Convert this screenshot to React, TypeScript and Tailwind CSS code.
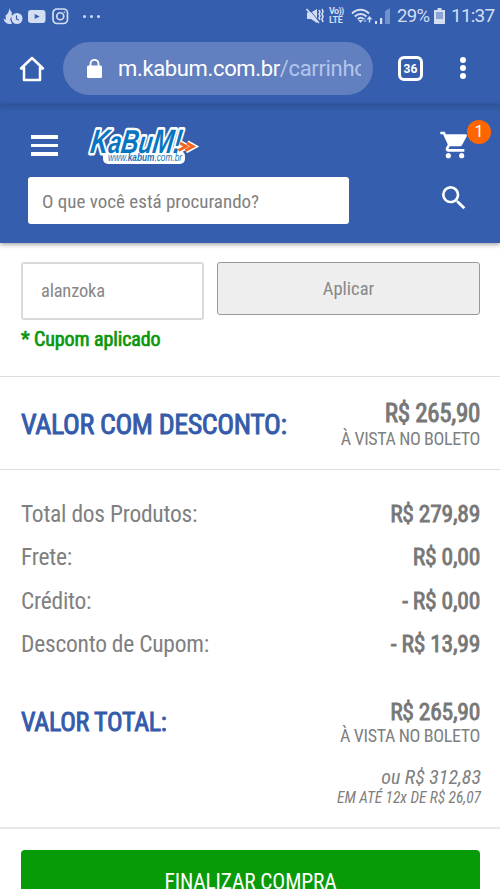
import React from 'react';
import { MdSearch, MdShoppingCart } from 'react-icons/md';

interface SummaryRow {
    label: string;
    value: string;
}

const summaryRows: SummaryRow[] = [
    { label: 'Total dos Produtos:', value: 'R$ 279,89' },
    { label: 'Frete:', value: 'R$ 0,00' },
    { label: 'Crédito:', value: '- R$ 0,00' },
    { label: 'Desconto de Cupom:', value: '- R$ 13,99' },
];

const StatusBar: React.FC = () => (
    <div className="flex h-8 items-center justify-between bg-[#355fae] pr-[6px] pl-[3px] text-[#d3def3]">
        <div className="flex items-center">
            <svg width="20" height="17" viewBox="0 0 20 17" fill="currentColor">
                <path d="M6 0c1 3 4 4 2.500 6.500L9.500 8 7 11l2 5C4 16.500 1 14 .6 10.500L3 12 2.500 7.500c2-1 4-4 3.500-7.500Z" />
                <circle cx="14" cy="10.500" r="5.500" />
                <path d="M13.500 7.500V11l2.400 1.200" stroke="#355fae" strokeWidth="1.200" fill="none" />
            </svg>
            <svg className="ml-[5px]" width="18" height="13" viewBox="0 0 18 13">
                <rect width="17.500" height="13" rx="3" fill="currentColor" />
                <path d="M6.700 4v5l5-2.500Z" fill="#355fae" />
            </svg>
            <svg className="ml-[6px]" width="17" height="17" viewBox="0 0 17 17" fill="none" stroke="currentColor" strokeWidth="1.700">
                <rect x="1" y="1" width="14.500" height="14.500" rx="4" />
                <circle cx="8.250" cy="8.250" r="3.500" />
                <circle cx="12.300" cy="4.200" r=".5" strokeWidth="1" />
            </svg>
            <div className="ml-[14px] flex gap-[4px]">
                <i className="size-[3px] rounded-full bg-current" />
                <i className="size-[3px] rounded-full bg-current" />
                <i className="size-[3px] rounded-full bg-current" />
            </div>
        </div>
        <div className="flex items-center">
            <svg width="18" height="16" viewBox="0 0 18 16" fill="currentColor">
                <path d="M1 4.500h4L11 1v14l-6-4H1Z" />
                <path d="m2 0 12 14.500" stroke="#355fae" strokeWidth="1" />
                <path d="m.5 1 12.500 14" stroke="currentColor" strokeWidth="1.600" />
                <path d="m13 2 1 2-1 2 1 2-1 2 1 2M16 1l1 2.500L16 6l1 2.500-1 2.500 1 3" stroke="currentColor" strokeWidth="1.600" fill="none" />
            </svg>
            <div className="ml-[5px] flex w-[17px] flex-col text-[9px] leading-[9px] font-bold">
                <span className="whitespace-nowrap -tracking-[0.600px]">Vo))</span>
                <span className="-tracking-[0.300px]">LTE</span>
            </div>
            <svg className="ml-[5px]" width="22" height="17" viewBox="0 0 22 17" fill="none" stroke="currentColor" strokeWidth="1.900">
                <path d="M1 5.500c5-5 12-5 17 0M3.800 8.500c3.300-3.300 8.400-3.300 11.700 0M6.700 11.200c2-1.800 4-1.800 6 0" />
                <path d="m7.200 12 2.400 3 2.400-3Z" fill="currentColor" stroke="none" />
                <path d="M14 9.500v4.500m-1.500-2 1.500 2 1.500-2" strokeWidth="1" opacity=".5" />
                <path d="M18.500 14.500V9m-2 2.500 2-2.500 2 2.500" strokeWidth="1.300" />
            </svg>
            <svg className="ml-[2px]" width="16" height="16" viewBox="0 0 16 16" fill="currentColor">
                <path d="M0 13h2v3H0ZM5 10h2.200v6H5Z" />
                <path d="M10 3l5-3v16h-5Z" opacity=".4" />
            </svg>
            <span className="ml-[6px] w-[31px] text-[18.500px] leading-9 -tracking-[0.600px]">29%</span>
            <svg className="ml-[6px]" width="11" height="16" viewBox="0 0 11 16" fill="currentColor">
                <path d="M3.500 0h4v2H11v14H0V2h3.500Z" />
                <path d="M2 4h7v7H2Z" fill="#8da5d4" />
            </svg>
            <span className="ml-[6px] w-[43px] text-[19px] leading-9 -tracking-[0.800px]">11:37</span>
        </div>
    </div>
);

const BrowserBar: React.FC = () => (
    <div className="flex h-[73px] items-start bg-[#355fae] pt-[10px] text-white">
        <div className="flex h-[53px] w-[63px] items-center pl-[19px]">
            <svg width="26" height="26" viewBox="0 0 26 26" fill="none" stroke="currentColor" strokeWidth="2.500" strokeLinejoin="round">
                <path d="M5 12.500H2L13 2l11 10.500h-3M5 11v13h16V11" />
            </svg>
        </div>
        <div className="flex h-[53px] w-[310px] items-center rounded-full bg-[#6280bf] pl-[24px]">
            <svg width="15" height="19" viewBox="0 0 15 19">
                <rect y="6.500" width="15" height="12.500" rx="1.500" fill="currentColor" />
                <path d="M3.500 7V4.800a4 4 0 0 1 8 0V7" fill="none" stroke="currentColor" strokeWidth="1.800" />
            </svg>
            <div className="ml-[16px] w-[243px] overflow-hidden whitespace-nowrap text-[22px] leading-[56px] -tracking-[0.350px]">
                m.kabum.com.br<span className="text-[#b4c5eb]">/carrinho</span>
            </div>
        </div>
        <div className="mt-[14px] ml-[25px] flex size-[25px] items-center justify-center rounded-[6px] border-[3px] border-white text-[12px] font-bold">
            36
        </div>
        <div className="mt-[15px] ml-[37px] flex flex-col gap-[2px]">
            <i className="size-[6px] rounded-full bg-white" />
            <i className="size-[6px] rounded-full bg-white" />
            <i className="size-[6px] rounded-full bg-white" />
        </div>
    </div>
);

const Logo: React.FC = () => (
    <svg width="114" height="42" viewBox="0 0 114 42" className="overflow-visible">
        <rect x="16" y="26" width="82" height="13" rx="5" fill="#fff" />
        <g transform="translate(2.500 27.500) skewX(-8)">
            <text
                fontSize="31"
                fontWeight="bold"
                fontStyle="italic"
                fontFamily="Liberation Sans, Arial, sans-serif"
                fill="#0875c1"
                stroke="#fff"
                strokeWidth="5"
                strokeLinejoin="round"
                paintOrder="stroke"
                textLength="91"
                lengthAdjust="spacingAndGlyphs"
            >
                <tspan fontSize="34">K</tspan>a<tspan fontSize="33">B</tspan>u<tspan fontSize="34">M!</tspan>
            </text>
        </g>
        <g fill="none" strokeLinejoin="miter">
            <path d="m93 18 6 3.500-7.500 4M100 18l6 3.500-7.500 4" stroke="#fff" strokeWidth="6" />
            <path d="m93 18 6 3.500-7.500 4M100 18l6 3.500-7.500 4" stroke="#f4641f" strokeWidth="3" />
        </g>
        <text x="21" y="35.500" fontSize="10" fontStyle="italic" fontFamily="Liberation Sans, Arial, sans-serif" fill="#2274b3" textLength="74" lengthAdjust="spacingAndGlyphs">
            www.<tspan fontWeight="bold">kabum</tspan>.com.br
        </text>
    </svg>
);

const StoreHeader: React.FC = () => (
    <header className="h-[138px] bg-[#355fae] text-white shadow-[0_1px_5px_rgba(0,0,0,0.45)]">
        <div className="h-2 bg-linear-to-b from-[#2e559f] to-[#355fae]" />
        <div className="flex h-[64px]">
            <div className="mt-[22px] ml-[31px] flex w-[27px] flex-col gap-[5px]">
                <i className="h-[3.500px] bg-white" />
                <i className="h-[3.500px] bg-white" />
                <i className="h-[3.500px] bg-white" />
            </div>
            <div className="mt-[12px] ml-[29px]">
                <Logo />
            </div>
            <div className="relative mt-[16px] ml-[238px]">
                <MdShoppingCart className="size-[32px]" />
                <span className="absolute -top-[9px] left-[28px] flex size-[24px] items-center justify-center rounded-full bg-[#ff6600] font-['Roboto',sans-serif] text-[16px] [font-stretch:normal]">
                    1
                </span>
            </div>
        </div>
        <div className="flex">
            <div className="ml-[28px] h-[47px] w-[321px] rounded-[3px] bg-white pl-[14px] text-[19px] leading-[49px] text-[#808080]">
                O que você está procurando?
            </div>
            <MdSearch className="mt-[5px] ml-[89px] size-[32px]" />
        </div>
    </header>
);

export default function App() {
    return (
        <div className="flex h-[889px] w-[500px] flex-col overflow-hidden bg-white text-[#777]">
            <div className="font-['Roboto',sans-serif]">
                <StatusBar />
                <BrowserBar />
            </div>
            <div className="font-['Roboto_Condensed','Roboto',sans-serif] [font-stretch:condensed]">
                <StoreHeader />

                {/* Coupon */}
                <section className="h-[134px] border-b border-[#dedede] pt-[19px] pr-[20px] pl-[21px]">
                    <div className="flex gap-[13px]">
                        <div className="h-[58px] w-[183px] rounded-[3px] border-2 border-[#dadada] pl-[18px] text-[18.500px] leading-[55px] -tracking-[0.200px] text-[#888]">
                            alanzoka
                        </div>
                        <div className="h-[53px] w-[263px] rounded-[3px] border border-[#999] bg-[#eee] text-center text-[18.500px] leading-[52px] text-[#888]">
                            Aplicar
                        </div>
                    </div>
                    <p className="mt-[7px] text-[20px] leading-[24px] -tracking-[0.100px] text-[#0a970a] [-webkit-text-stroke:0.700px]">
                        * Cupom aplicado
                    </p>
                </section>

                {/* Discounted value */}
                <section className="flex h-[93px] items-center justify-between border-b border-[#dedede] pt-[3px] pr-[20px] pl-[21px]">
                    <h2 className="text-[28px] -tracking-[0.400px] text-[#345bab] [-webkit-text-stroke:0.900px]">VALOR COM DESCONTO:</h2>
                    <div className="text-right">
                        <p className="text-[25px] leading-[27px] -tracking-[0.300px] [-webkit-text-stroke:0.900px]">R$ 265,90</p>
                        <p className="text-[18px] leading-[23px] -tracking-[0.400px] text-[#808080]">À VISTA NO BOLETO</p>
                    </div>
                </section>

                {/* Totals */}
                <section className="h-[359px] border-b-2 border-[#e8e8e8] pt-[23px] pr-[20px] pl-[21px]">
                    {summaryRows.map((row) => (
                        <div key={row.label} className="flex h-[43.400px] items-center justify-between text-[23.500px] -tracking-[0.250px]">
                            <span className="text-[#808080]">{row.label}</span>
                            <span className="[-webkit-text-stroke:0.800px]">{row.value}</span>
                        </div>
                    ))}
                    <div className="mt-[32px] flex items-center justify-between">
                        <h2 className="text-[26px] -tracking-[0.320px] text-[#345bab] [-webkit-text-stroke:0.900px]">VALOR TOTAL:</h2>
                        <div className="text-right">
                            <p className="text-[23.500px] leading-[26px] -tracking-[0.250px] [-webkit-text-stroke:0.800px]">R$ 265,90</p>
                            <p className="text-[18px] leading-[22px] -tracking-[0.350px] text-[#808080]">À VISTA NO BOLETO</p>
                        </div>
                    </div>
                    <div className="-mr-px mt-[19px] text-right text-[#808080] italic">
                        <p className="text-[20px] leading-[23px]">ou R$ 312,83</p>
                        <p className="text-[15.500px] leading-[19px] -tracking-[0.050px]">EM ATÉ 12x DE R$ 26,07</p>
                    </div>
                </section>

                <div className="pt-[21px] pr-[20px] pl-[21px]">
                    <div className="h-[70px] rounded-[4px] bg-[#089b08] pt-[18px] text-center text-[21.500px] leading-[27px] -tracking-[0.150px] text-white">
                        FINALIZAR COMPRA
                    </div>
                </div>
            </div>
        </div>
    );
}
